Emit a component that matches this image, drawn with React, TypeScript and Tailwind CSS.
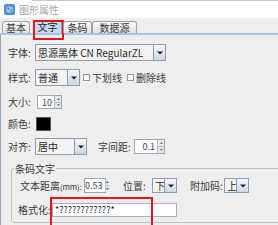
import React from 'react';

function Arrow() {
  return (
    <div className="flex h-full w-[12px] shrink-0 items-center justify-center border-l border-[#8e9cb0] bg-gradient-to-b from-[#f6f8fb] to-[#cbd6e4]">
      <svg width="6" height="4" viewBox="0 0 6 4">
        <path d="M0 0.5h6L3 3.5z" fill="#1e1e1e" />
      </svg>
    </div>
  );
}

function Combo({ text, className }: { text: string; className: string }) {
  return (
    <div className={`flex shrink-0 items-stretch border border-[#8e9cb0] bg-[#f3f3f3] ${className}`}>
      <div className="flex flex-1 items-center overflow-hidden whitespace-nowrap pl-[2px] text-[10px] text-[#2a2a2a]">{text}</div>
      <Arrow />
    </div>
  );
}

function Spinner({ value, className }: { value: string; className: string }) {
  return (
    <div className={`flex shrink-0 border border-[#9ca8b6] bg-white ${className}`}>
      <div className="flex flex-1 items-center justify-end pr-[2px] text-[9px] text-[#444]">{value}</div>
      <div className="flex w-[7px] flex-col border-l border-[#b4bcc6] bg-[#e4e7eb]">
        <div className="flex flex-1 items-center justify-center border-b border-[#b4bcc6]">
          <svg width="3" height="2" viewBox="0 0 3 2"><path d="M0 2h3L1.5 0z" fill="#777" /></svg>
        </div>
        <div className="flex flex-1 items-center justify-center">
          <svg width="3" height="2" viewBox="0 0 3 2"><path d="M0 0h3L1.5 2z" fill="#777" /></svg>
        </div>
      </div>
    </div>
  );
}

function Check({ label }: { label: string }) {
  return (
    <div className="flex shrink-0 items-center gap-[2px] whitespace-nowrap">
      <div className="h-[7px] w-[7px] border border-[#8f9aa8] bg-white" />
      <span>{label}</span>
    </div>
  );
}

function Label({ text, w, ml }: { text: React.ReactNode; w: string; ml?: string }) {
  return <span className={`shrink-0 whitespace-nowrap ${w} ${ml ?? ''}`}>{text}</span>;
}

function Tab({ label, w, active }: { label: string; w: string; active?: boolean }) {
  return (
    <div
      className={`relative flex items-center justify-center rounded-t-[3px] border border-b-0 text-[10px] leading-none ${w} ${
        active
          ? 'h-[13px] border-[#8aa3c2] bg-[#c6daf0] text-[#222]'
          : 'h-[12px] border-[#a0a0a0] bg-gradient-to-b from-[#fbfbfb] to-[#dedede] text-[#3a3a3a]'
      }`}
    >
      {label}
      {active && <div className="absolute -left-[1px] -top-[1px] h-[20px] w-[31px] border-2 border-[#e3161c]" />}
    </div>
  );
}

export default function App() {
  return (
    <div className="h-[225px] w-[278px] overflow-hidden bg-[#eeeeee] font-['Noto_Sans_CJK_SC','Noto_Sans',sans-serif] text-[10px] leading-none text-[#3a3a3a]">
      {/* title bar */}
      <div className="flex h-[18px] flex-col bg-white">
        <div className="ml-[32px] h-px bg-[#c8c8c8]" />
        <div className="flex flex-1 items-center gap-[4px] pl-[4px]">
          <svg width="11" height="11" viewBox="0 0 11 11">
            <rect x="0" y="0" width="11" height="11" rx="2" fill="#4a90e2" />
            <circle cx="5.5" cy="5.5" r="3.2" fill="#9fd0ff" />
            <circle cx="4.5" cy="4.5" r="1.3" fill="#e8584c" />
            <circle cx="6.8" cy="6.6" r="1.2" fill="#4bb86a" />
          </svg>
          <span className="text-[10px] text-[#a6a6a6]">图形属性</span>
        </div>
      </div>

      {/* tabs */}
      <div className="relative z-10 flex h-[15px] items-end pl-[2px]">
        <Tab label="基本" w="w-[28px]" />
        <div className="ml-[3px]">
          <Tab label="文字" w="w-[29px]" active />
        </div>
        <div className="ml-[1px]">
          <Tab label="条码" w="w-[29px]" />
        </div>
        <Tab label="数据源" w="w-[45px]" />
      </div>
      <div className="h-[2px] bg-[#a9c4e8]" />

      {/* panel */}
      <div className="flex h-[190px] flex-col border-l border-[#9aa5b3]">
        <div className="mt-[9px] flex h-[17px] items-center pl-[7px]">
          <Label text="字体:" w="w-[27px]" />
          <Combo text="思源黑体 CN RegularZL" className="h-[17px] w-[131px]" />
        </div>

        <div className="mt-[8px] flex h-[17px] items-center pl-[7px]">
          <Label text="样式:" w="w-[27px]" />
          <Combo text="普通" className="h-[17px] w-[45px]" />
          <div className="ml-[3px]">
            <Check label="下划线" />
          </div>
          <div className="ml-[5px]">
            <Check label="删除线" />
          </div>
        </div>

        <div className="mt-[9px] flex h-[14px] items-center pl-[7px]">
          <Label text="大小:" w="w-[29px]" />
          <Spinner value="10" className="h-[14px] w-[25px]" />
        </div>

        <div className="mt-[8px] flex h-[14px] items-center pl-[7px]">
          <Label text="颜色:" w="w-[28px]" />
          <div className="h-[14px] w-[15px] border border-[#555] bg-black" />
        </div>

        <div className="mt-[7px] flex h-[17px] items-center pl-[7px]">
          <Label text="对齐:" w="w-[27px]" />
          <Combo text="居中" className="h-[17px] w-[52px]" />
          <Label text="字间距:" w="w-[36px]" ml="ml-[11px]" />
          <Spinner value="0.1" className="h-[15px] w-[31px]" />
        </div>

        <fieldset className="ml-[10px] mt-[8px] w-[290px] rounded-[3px] border border-[#b8c1cc] px-0 pb-[5px]">
          <legend className="ml-[2px] px-[1px] text-[10px] leading-[11px]">条码文字</legend>
          <div className="mt-[4px] flex h-[15px] items-center pl-[8px]">
            <Label
              text={
                <>
                  文本距离<span className="text-[8px] tracking-[-0.2px]">(mm):</span>
                </>
              }
              w="w-[64px]"
            />
            <Spinner value="0.53" className="h-[15px] w-[22px]" />
            <Label text="位置:" w="w-[29px]" ml="ml-[17px]" />
            <Combo text="下" className="h-[15px] w-[25px]" />
            <Label text="附加码:" w="w-[34px]" ml="ml-[13px]" />
            <Combo text="上" className="h-[15px] w-[25px]" />
          </div>
          <div className="mt-[9px] flex h-[15px] items-center pl-[6px]">
            <Label text="格式化:" w="w-[34px]" />
            <div className="relative shrink-0">
              <div className="flex h-[14px] w-[125px] items-center border border-[#a5b2c2] bg-white pl-[2px] text-[9px] text-[#222]">
                *????????????*
              </div>
              <div className="absolute -left-[2px] -top-[6px] h-[32px] w-[103px] border-2 border-[#e3161c]" />
            </div>
          </div>
        </fieldset>
      </div>
    </div>
  );
}
